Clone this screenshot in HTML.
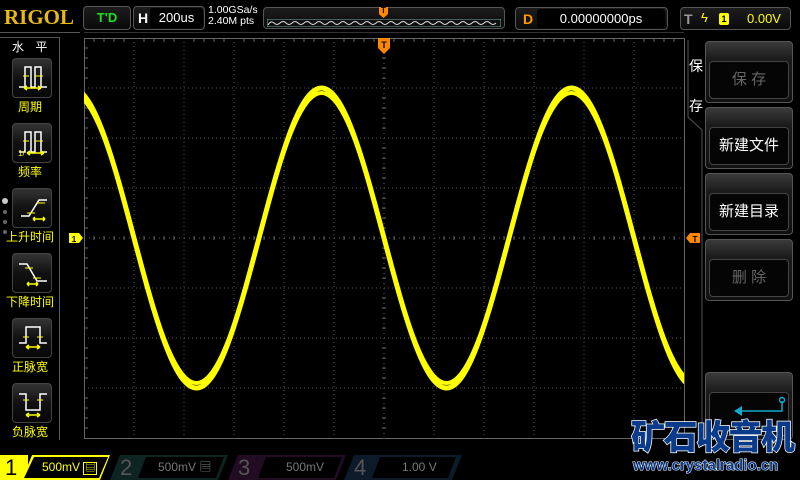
<!DOCTYPE html>
<html><head><meta charset="utf-8"><style>
*{margin:0;padding:0;box-sizing:border-box}
body{width:800px;height:480px;background:#000;overflow:hidden;position:relative;font-family:"Liberation Sans","Noto Sans CJK SC",sans-serif;color:#fff}
.a{position:absolute}
.box{position:absolute;border:1px solid #555;border-radius:4px;background:linear-gradient(#1c1c1c,#0a0a0a)}
.lb{position:absolute;left:12px;width:40px;height:40px;border:1px solid #444;border-radius:4px;background:linear-gradient(#333,#111 50%,#080808)}
.lt{position:absolute;left:0;width:60px;text-align:center;color:#ff0;font-size:12px}
.rb{position:absolute;left:705px;width:88px;height:62px;border:1px solid #555;border-radius:4px;background:linear-gradient(#3a3a3a,#1a1a1a 30%,#111)}
.rb div{position:absolute;left:3px;right:3px;top:19px;bottom:3px;border:1px solid #444;border-radius:4px;background:#050505;text-align:center;line-height:36px;font-size:15px}
</style></head><body>
<div class="a" style="left:4px;top:5px;font-family:'Liberation Serif',serif;font-weight:bold;font-size:21px;color:#e8b818;letter-spacing:0px">RIGOL</div>
<div class="box" style="left:83px;top:6px;width:48px;height:24px;color:#1fdf1f;font-weight:bold;font-size:13px;text-align:center;line-height:22px">T'D</div>
<div class="box" style="left:133px;top:6px;width:72px;height:24px"><span class="a" style="left:4px;top:3px;font-weight:bold;font-size:14px">H</span><div class="a" style="left:16px;top:1px;width:53px;height:20px;background:#000;border-radius:3px;font-size:13px;text-align:center;line-height:20px">200us</div></div>
<div class="a" style="left:208px;top:5px;font-size:10.5px;line-height:11px">1.00GSa/s<br>2.40M pts</div>
<div class="box" style="left:263px;top:7px;width:242px;height:22px">
<svg class="a" style="left:3px;top:11px" width="234" height="8"><rect x="0" y="0" width="234" height="8" fill="none" stroke="#7aa" stroke-width="1"/><path d="M1 6 Q4 1 7 4 T13 4 T19 4 T25 4 T31 4 T37 4 T43 4 T49 4 T55 4 T61 4 T67 4 T73 4 T79 4 T85 4 T91 4 T97 4 T103 4 T109 4 T115 4 T121 4 T127 4 T133 4 T139 4 T145 4 T151 4 T157 4 T163 4 T169 4 T175 4 T181 4 T187 4 T193 4 T199 4 T205 4 T211 4 T217 4 T223 4 T229 4" stroke="#ddd" fill="none"/></svg>
<div class="a" style="left:115px;top:-1px;width:9px;height:11px;background:#f80;clip-path:polygon(0 0,100% 0,100% 65%,50% 100%,0 65%);color:#000;font-size:8px;text-align:center;line-height:8px;font-weight:bold">T</div></div>
<div class="box" style="left:515px;top:7px;width:153px;height:23px"><span class="a" style="left:7px;top:3px;color:#f90;font-weight:bold;font-size:14px">D</span><div class="a" style="left:21px;top:1px;width:128px;height:19px;background:#000;border-radius:3px;font-size:13px;text-align:center;line-height:19px">0.00000000ps</div></div>
<div class="box" style="left:680px;top:7px;width:111px;height:23px"><span class="a" style="left:3px;top:3px;color:#999;font-weight:bold;font-size:14px">T</span><span class="a" style="left:20px;top:2px;color:#ff0;font-size:13px">ϟ</span><span class="a" style="left:38px;top:5px;width:10px;height:12px;background:#ff0;color:#000;font-size:9px;text-align:center;line-height:12px;border-radius:2px;font-weight:bold">1</span><span class="a" style="left:66px;top:3px;color:#ff0;font-size:13px">0.00V</span></div>
<div class="a" style="left:0;top:32px;width:80px;height:1px;background:#555"></div>
<div class="a" style="left:84px;top:32px;width:600px;height:1px;background:#333"></div>
<div class="a" style="left:59px;top:37px;width:1px;height:403px;background:#555"></div>
<div class="a" style="left:0;top:37px;width:60px;height:1px;background:#555"></div>
<div class="a" style="left:12px;top:38px;color:#fff;font-size:12px;letter-spacing:4px">水 平</div>
<div class="lb" style="top:58px"><svg width="40" height="40"><path d="M6 28H12V8H18V28H22V8H28V28H34" stroke="#fff" fill="none" stroke-width="1.5"/><path d="M10 17h6M22 17h8" stroke="#ff0"/><path d="M11 29h17M11 29l3-2M11 29l3 2M28 29l-3-2M28 29l-3 2" stroke="#ff0" stroke-width="1.5"/></svg></div>
<div class="lt" style="top:98px">周期</div>
<div class="lb" style="top:123px"><svg width="40" height="40"><path d="M6 28H12V8H18V28H22V8H28V28H34" stroke="#fff" fill="none" stroke-width="1.5"/><path d="M10 17h6M22 17h8" stroke="#ff0"/><path d="M14 29h17M14 29l3-2M14 29l3 2M31 29l-3-2M31 29l-3 2" stroke="#ff0" stroke-width="1.5"/><text x="5" y="32" fill="#ff0" font-size="8">1/</text></svg></div>
<div class="lt" style="top:163px">频率</div>
<div class="lb" style="top:188px"><svg width="40" height="40"><path d="M8 27H16L26 11H34" stroke="#fff" fill="none" stroke-width="1.5"/><path d="M14 24h8M24 14h8" stroke="#ff0"/><path d="M20 30h12M20 30l2-2M20 30l2 2M32 30l-2-2M32 30l-2 2" stroke="#ff0" stroke-width="1.5"/></svg></div>
<div class="lt" style="top:228px">上升时间</div>
<div class="lb" style="top:253px"><svg width="40" height="40"><path d="M6 10H14L24 27H34" stroke="#fff" fill="none" stroke-width="1.5"/><path d="M12 14h8M20 24h8" stroke="#ff0"/><path d="M14 30h11M14 30l2-2M14 30l2 2M25 30l-2-2M25 30l-2 2" stroke="#ff0" stroke-width="1.5"/></svg></div>
<div class="lt" style="top:293px">下降时间</div>
<div class="lb" style="top:318px"><svg width="40" height="40"><path d="M6 24H13V8H27V24H34" stroke="#fff" fill="none" stroke-width="1.5"/><path d="M10 18h6M24 18h6" stroke="#ff0"/><path d="M13 28h14M13 28l3-2M13 28l3 2M27 28l-3-2M27 28l-3 2" stroke="#ff0" stroke-width="1.5"/></svg></div>
<div class="lt" style="top:358px">正脉宽</div>
<div class="lb" style="top:383px"><svg width="40" height="40"><path d="M6 10H13V26H27V10H34" stroke="#fff" fill="none" stroke-width="1.5"/><path d="M10 16h6M24 16h6" stroke="#ff0"/><path d="M13 31h14M13 31l3-2M13 31l3 2M27 31l-3-2M27 31l-3 2" stroke="#ff0" stroke-width="1.5"/></svg></div>
<div class="lt" style="top:423px">负脉宽</div>
<div class="a" style="left:2px;top:198px;width:6px;height:6px;border-radius:3px;background:#ccc"></div>
<div class="a" style="left:3px;top:210px;width:4px;height:4px;border-radius:2px;background:#666"></div>
<div class="a" style="left:3px;top:220px;width:4px;height:4px;border-radius:2px;background:#666"></div>
<div class="a" style="left:3px;top:230px;width:4px;height:4px;border-radius:2px;background:#666"></div>

<svg class="a" style="left:0;top:0" width="800" height="480">
<g stroke="#555" stroke-dasharray="1,3" stroke-width="1">
<path d="M134 38V438M184 38V438M234 38V438M284 38V438M334 38V438M434 38V438M484 38V438M534 38V438M584 38V438M634 38V438"/>
<path d="M84 88H684M84 138H684M84 188H684M84 288H684M84 338H684M84 388H684"/>
</g>
<g stroke="#666"><path d="M84.5 38.5H684.5V438.5H84.5Z" fill="none"/>
<path d="M84 238H684M384 38V438" stroke-dasharray="1,4"/>
</g>
<g stroke="#666">
<path d="M94 38v4M104 38v4M114 38v4M124 38v4M144 38v4M154 38v4M164 38v4M174 38v4M194 38v4M204 38v4M214 38v4M224 38v4M244 38v4M254 38v4M264 38v4M274 38v4M294 38v4M304 38v4M314 38v4M324 38v4M344 38v4M354 38v4M364 38v4M374 38v4M394 38v4M404 38v4M414 38v4M424 38v4M444 38v4M454 38v4M464 38v4M474 38v4M494 38v4M504 38v4M514 38v4M524 38v4M544 38v4M554 38v4M564 38v4M574 38v4M594 38v4M604 38v4M614 38v4M624 38v4M644 38v4M654 38v4M664 38v4M674 38v4"/>
<path d="M84 48h4M84 58h4M84 68h4M84 78h4M84 98h4M84 108h4M84 118h4M84 128h4M84 148h4M84 158h4M84 168h4M84 178h4M84 198h4M84 208h4M84 218h4M84 228h4M84 248h4M84 258h4M84 268h4M84 278h4M84 298h4M84 308h4M84 318h4M84 328h4M84 348h4M84 358h4M84 368h4M84 378h4M84 398h4M84 408h4M84 418h4M84 428h4"/>
<path d="M94 236v4M104 236v4M114 236v4M124 236v4M144 236v4M154 236v4M164 236v4M174 236v4M194 236v4M204 236v4M214 236v4M224 236v4M244 236v4M254 236v4M264 236v4M274 236v4M294 236v4M304 236v4M314 236v4M324 236v4M344 236v4M354 236v4M364 236v4M374 236v4M394 236v4M404 236v4M414 236v4M424 236v4M444 236v4M454 236v4M464 236v4M474 236v4M494 236v4M504 236v4M514 236v4M524 236v4M544 236v4M554 236v4M564 236v4M574 236v4M594 236v4M604 236v4M614 236v4M624 236v4M644 236v4M654 236v4M664 236v4M674 236v4"/>
<path d="M382 48h4M382 58h4M382 68h4M382 78h4M382 98h4M382 108h4M382 118h4M382 128h4M382 148h4M382 158h4M382 168h4M382 178h4M382 198h4M382 208h4M382 218h4M382 228h4M382 248h4M382 258h4M382 268h4M382 278h4M382 298h4M382 308h4M382 318h4M382 328h4M382 348h4M382 358h4M382 368h4M382 378h4M382 398h4M382 408h4M382 418h4M382 428h4"/>
</g>
<clipPath id="c"><rect x="84" y="38" width="600" height="400"/></clipPath>
<path clip-path="url(#c)" d="M71.5,88 C94.12,88 113.62,161.16 134,238 S173.88,388 196.5,388 S238.62,314.84 259,238 S298.88,88 321.5,88 S363.62,161.16 384,238 S423.88,388 446.5,388 S488.62,314.84 509,238 S548.88,88 571.5,88 S613.62,161.16 634,238 S673.88,388 696.5,388" stroke="#ff0" stroke-width="5" fill="none"/>
<path clip-path="url(#c)" d="M71.5,93 C94.12,93 113.62,161.16 134,238 S173.88,383 196.5,383 S238.62,314.84 259,238 S298.88,93 321.5,93 S363.62,161.16 384,238 S423.88,383 446.5,383 S488.62,314.84 509,238 S548.88,93 571.5,93 S613.62,161.16 634,238 S673.88,383 696.5,383" stroke="#ff0" stroke-width="4" fill="none"/>
<path d="M378 38h12v10l-6 6l-6-6z" fill="#f80"/><text x="384" y="48" fill="#000" font-size="9" font-weight="bold" text-anchor="middle" font-family="Liberation Sans">T</text>
<path d="M69 233h10l4 5l-4 5h-10z" fill="#ff0"/><text x="74" y="242" fill="#000" font-size="8" font-weight="bold" text-anchor="middle" font-family="Liberation Sans">1</text>
<path d="M700 233h-10l-4 5l4 5h10z" fill="#f80"/><text x="695" y="242" fill="#000" font-size="8" font-weight="bold" text-anchor="middle" font-family="Liberation Sans">T</text>
<path d="M688 40V117L702 130V440" stroke="#555" fill="none"/>
</svg>
<div class="a" style="left:689px;top:46px;font-size:14px;line-height:40px">保<br>存</div>
<div class="rb" style="top:41px"><div style="color:#666">保 存</div></div>
<div class="rb" style="top:107px"><div>新建文件</div></div>
<div class="rb" style="top:173px"><div>新建目录</div></div>
<div class="rb" style="top:239px"><div style="color:#666">删 除</div></div>
<div class="rb" style="top:372px;height:68px"><div><svg width="80" height="40"><path d="M72 8V18H30" stroke="#1ac" stroke-width="1.5" fill="none"/><circle cx="72" cy="7" r="2.5" fill="none" stroke="#1ac" stroke-width="1.5"/><path d="M24 18l8-5v10z" fill="#1ac"/></svg></div></div>

<div class="a" style="left:0;top:455px;width:800px;height:25px;background:#000"></div>
<div class="a" style="left:0;top:455px;width:28px;height:25px;background:#ff0;color:#000;font-size:22px;line-height:25px;padding-left:5px">1</div>
<div class="a" style="left:22px;top:455px;width:88px;height:25px;background:#ff0;clip-path:polygon(10px 0,100% 0,calc(100% - 10px) 100%,0 100%)"></div>
<div class="a" style="left:24px;top:457px;width:84px;height:21px;background:#000;clip-path:polygon(10px 0,100% 0,calc(100% - 9px) 100%,0 100%);color:#ff0;font-size:12px;line-height:21px;padding-left:18px">500mV <span style="font-size:10px;border:1px solid #ff0;padding:0 1px">▤</span></div>
<div class="a" style="left:110px;top:455px;width:118px;height:25px;background:#0d2420;clip-path:polygon(10px 0,100% 0,calc(100% - 10px) 100%,0 100%);color:#555;font-size:22px;line-height:25px;padding-left:10px">2</div>
<div class="a" style="left:138px;top:457px;width:86px;height:21px;background:#000;clip-path:polygon(8px 0,100% 0,calc(100% - 8px) 100%,0 100%);color:#777;font-size:12px;line-height:21px;padding-left:20px">500mV ▤</div>
<div class="a" style="left:228px;top:455px;width:118px;height:25px;background:#220c22;clip-path:polygon(10px 0,100% 0,calc(100% - 10px) 100%,0 100%);color:#555;font-size:22px;line-height:25px;padding-left:10px">3</div>
<div class="a" style="left:258px;top:457px;width:84px;height:21px;background:#000;clip-path:polygon(8px 0,100% 0,calc(100% - 8px) 100%,0 100%);color:#777;font-size:12px;line-height:21px;padding-left:28px">500mV</div>
<div class="a" style="left:344px;top:455px;width:118px;height:25px;background:#0c1a2a;clip-path:polygon(10px 0,100% 0,calc(100% - 10px) 100%,0 100%);color:#555;font-size:22px;line-height:25px;padding-left:10px">4</div>
<div class="a" style="left:372px;top:457px;width:84px;height:21px;background:#000;clip-path:polygon(8px 0,100% 0,calc(100% - 8px) 100%,0 100%);color:#777;font-size:12px;line-height:21px;padding-left:30px">1.00 V</div>

<div class="a" style="left:631px;top:414px;font-size:34px;line-height:42px;font-weight:900;color:#0a3a8a;-webkit-text-stroke:1.5px #fff;paint-order:stroke fill;letter-spacing:-1.5px;font-family:'Noto Sans CJK SC',sans-serif">矿石收音机</div>
<div class="a" style="left:633px;top:457px;font-size:15px;font-weight:bold;color:#0a3a8a;-webkit-text-stroke:1px #fff;paint-order:stroke fill;font-family:'Liberation Sans',sans-serif">www.crystalradio.cn</div>
</body></html>
